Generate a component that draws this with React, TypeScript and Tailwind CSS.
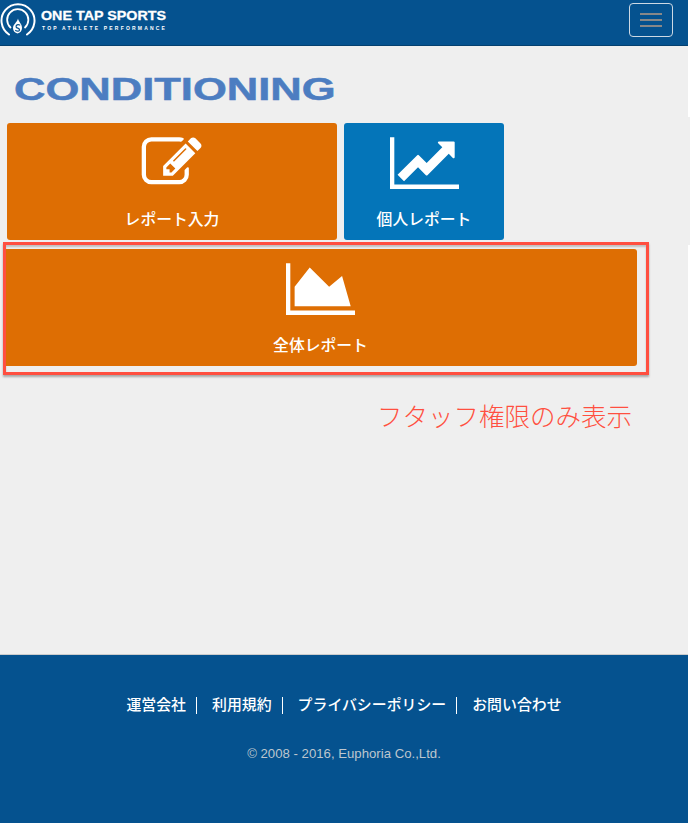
import { type FC } from "react";

const jp = "font-['Liberation_Sans','Noto_Sans_CJK_JP',sans-serif]";

const links = ["運営会社", "利用規約", "プライバシーポリシー", "お問い合わせ"];

const EditIcon: FC = () => (
    <svg className="w-[60px] h-[60px] overflow-visible" viewBox="128 64 1792 1792" fill="#fff">
        <path d="M888 1184l116-116-152-152-116 116v56h96v96h56zm440-720q-16-16-33 1l-350 350q-17 17-1 33t33-1l350-350q17-17 1-33zm80 594v190q0 119-84.5 203.5t-203.5 84.5h-832q-119 0-203.5-84.5t-84.5-203.5v-832q0-119 84.5-203.5t203.5-84.5h832q63 0 117 25 15 7 18 23 3 17-9 29l-49 49q-14 14-32 8-23-6-45-6h-832q-66 0-113 47t-47 113v832q0 66 47 113t113 47h832q66 0 113-47t47-113v-126q0-13 9-22l64-64q15-15 35-7t20 29zm-96-738l288 288-672 672h-288v-288zm444 132l-92 92-288-288 92-92q28-28 68-28t68 28l152 152q28 28 28 68t-28 68z" />
    </svg>
);

const LineIcon: FC = () => (
    <svg className="w-[69px] h-[52px]" viewBox="0 128 2048 1536" fill="#fff">
        <path d="M2048 1536v128h-2048v-1536h128v1408h1920zm-128-1248v435q0 21-19.5 29.5t-35.5-7.5l-121-121-633 633q-10 10-23 10t-23-10l-233-233-416 416-192-192 585-585q10-10 23-10t23 10l233 233 464-464-121-121q-16-16-7.5-35.5t29.5-19.5h435q14 0 23 9t9 23z" />
    </svg>
);

const AreaIcon: FC = () => (
    <svg className="w-[69px] h-[52px]" viewBox="0 128 2048 1536" fill="#fff">
        <path d="M2048 1536v128h-2048v-1536h128v1408h1920zm-384-1024l256 896h-1664v-576l448-576 576 576z" />
    </svg>
);

const Logo: FC = () => (
    <div className="flex items-start">
        <svg className="w-[36px] h-[36px]" viewBox="0 0 36 36" fill="none" stroke="#fff" strokeLinecap="round">
            <path d="M9 31.5 A16.5 16.5 0 1 1 27 31.5" strokeWidth="2" />
            <path d="M10.5 24.5 A10.6 10.6 0 1 1 25 24.5" strokeWidth="1.8" />
            <path d="M18 15.5 C18.5 19 22 20.5 22 25 C22 28 20 30 17.5 30.5 C15 30 13 28 13 25 C13 21.5 17 19.5 18 15.5 Z" fill="#fff" stroke="none" />
            <path d="M19.7 22 C17.7 21 15.7 22 16.2 24 C16.7 25.5 19.7 25 19.5 27 C19.3 28.5 17.2 28.5 15.7 27.5" stroke="#05528f" strokeWidth="1.3" />
        </svg>
        <div className="ml-[5px] mt-[7px] flex flex-col font-['Liberation_Sans',sans-serif] text-white">
            <span className="text-[13px] leading-[12px] font-bold origin-left scale-x-[1.1] whitespace-nowrap [-webkit-text-stroke:0.3px_#fff]">ONE TAP SPORTS</span>
            <span className="mt-[3px] ml-[1px] text-[5px] leading-[6px] font-bold tracking-[2.2px] whitespace-nowrap">TOP ATHLETE PERFORMANCE</span>
        </div>
    </div>
);

const App: FC = () => {
    return (
        <div className={`w-[690px] h-[823px] flex bg-white overflow-hidden ${jp}`}>
            <div className="w-[688px] flex flex-col bg-[#efefef]">
                {/* navbar */}
                <header className="h-[46px] shrink-0 flex justify-between items-start bg-[#05528f] border-b border-[#04406f]">
                    <div className="pt-[3px]">
                        <Logo />
                    </div>
                    <button className="mt-[3px] mr-[15px] w-[44px] h-[34px] flex flex-col justify-center items-center gap-[4px] rounded-[4px] border border-[#cdd9e4]">
                        <span className="w-[22px] h-[2px] bg-[#888]" />
                        <span className="w-[22px] h-[2px] bg-[#888]" />
                        <span className="w-[22px] h-[2px] bg-[#888]" />
                    </button>
                </header>

                <main className="flex-1 flex flex-col">
                    <h1 className="mt-[25px] ml-[14px] h-[52px] text-[#4c7dc1] text-[32px] leading-[36px] font-bold origin-left scale-x-[1.36] whitespace-nowrap font-['Liberation_Sans',sans-serif] [-webkit-text-stroke:0.5px_#4c7dc1]">
                        CONDITIONING
                    </h1>

                    <div className="ml-[7px] flex gap-[7px]">
                        <a className="w-[330px] h-[117px] pt-[12px] flex flex-col items-center rounded-[3px] bg-[#de6e03] text-white">
                            <div className="ml-[7px] h-[64px]"><EditIcon /></div>
                            <span className="mt-[11px] text-[15.8px] leading-[20px] font-medium">レポート入力</span>
                        </a>
                        <a className="w-[160px] h-[117px] pt-[14px] flex flex-col items-center rounded-[3px] bg-[#0475b9] text-white">
                            <LineIcon />
                            <span className="mt-[21px] text-[15.8px] leading-[20px] font-medium">個人レポート</span>
                        </a>
                    </div>

                    {/* staff only annotation */}
                    <div className="mt-[2px] ml-[3px] w-[646px] h-[133px] border-[3px] border-[#ff4f40] shadow-[0_2px_2px_rgba(0,0,0,0.3),inset_0_2px_2px_rgba(0,0,0,0.2)] pt-[4px]">
                        <a className="w-[631px] h-[117px] pt-[14px] flex flex-col items-center rounded-r-[3px] bg-[#de6e03] text-white">
                            <div className="-ml-[3px]"><AreaIcon /></div>
                            <span className="-ml-[2px] mt-[21px] text-[15.8px] leading-[20px] font-medium">全体レポート</span>
                        </a>
                    </div>
                    <p className="mt-[25px] ml-[377px] text-[25.5px] leading-[34px] font-light text-[#ff4f40] whitespace-nowrap">
                        フタッフ権限のみ表示
                    </p>
                </main>

                <footer className="h-[169px] shrink-0 flex flex-col items-center bg-[#05528f] border-t border-[#ccc]">
                    <ul className="mt-[42px] flex items-center">
                        {links.map((label, i) => (
                            <li
                                key={label}
                                className={`text-[14.9px] leading-[17px] font-medium text-white ${i > 0 ? "pl-[15px] border-l border-white ml-[10px]" : ""}`}
                            >
                                {label}
                            </li>
                        ))}
                    </ul>
                    <p className="mt-[31px] text-[13.2px] leading-[18px] text-[#bdc6ce]">© 2008 - 2016, Euphoria Co.,Ltd.</p>
                </footer>
            </div>
            {/* pale strip on the page edge */}
            <div className="w-[2px] pt-[117px]">
                <div className="h-[128px] bg-[#efefef]" />
            </div>
        </div>
    );
};

export default App;
